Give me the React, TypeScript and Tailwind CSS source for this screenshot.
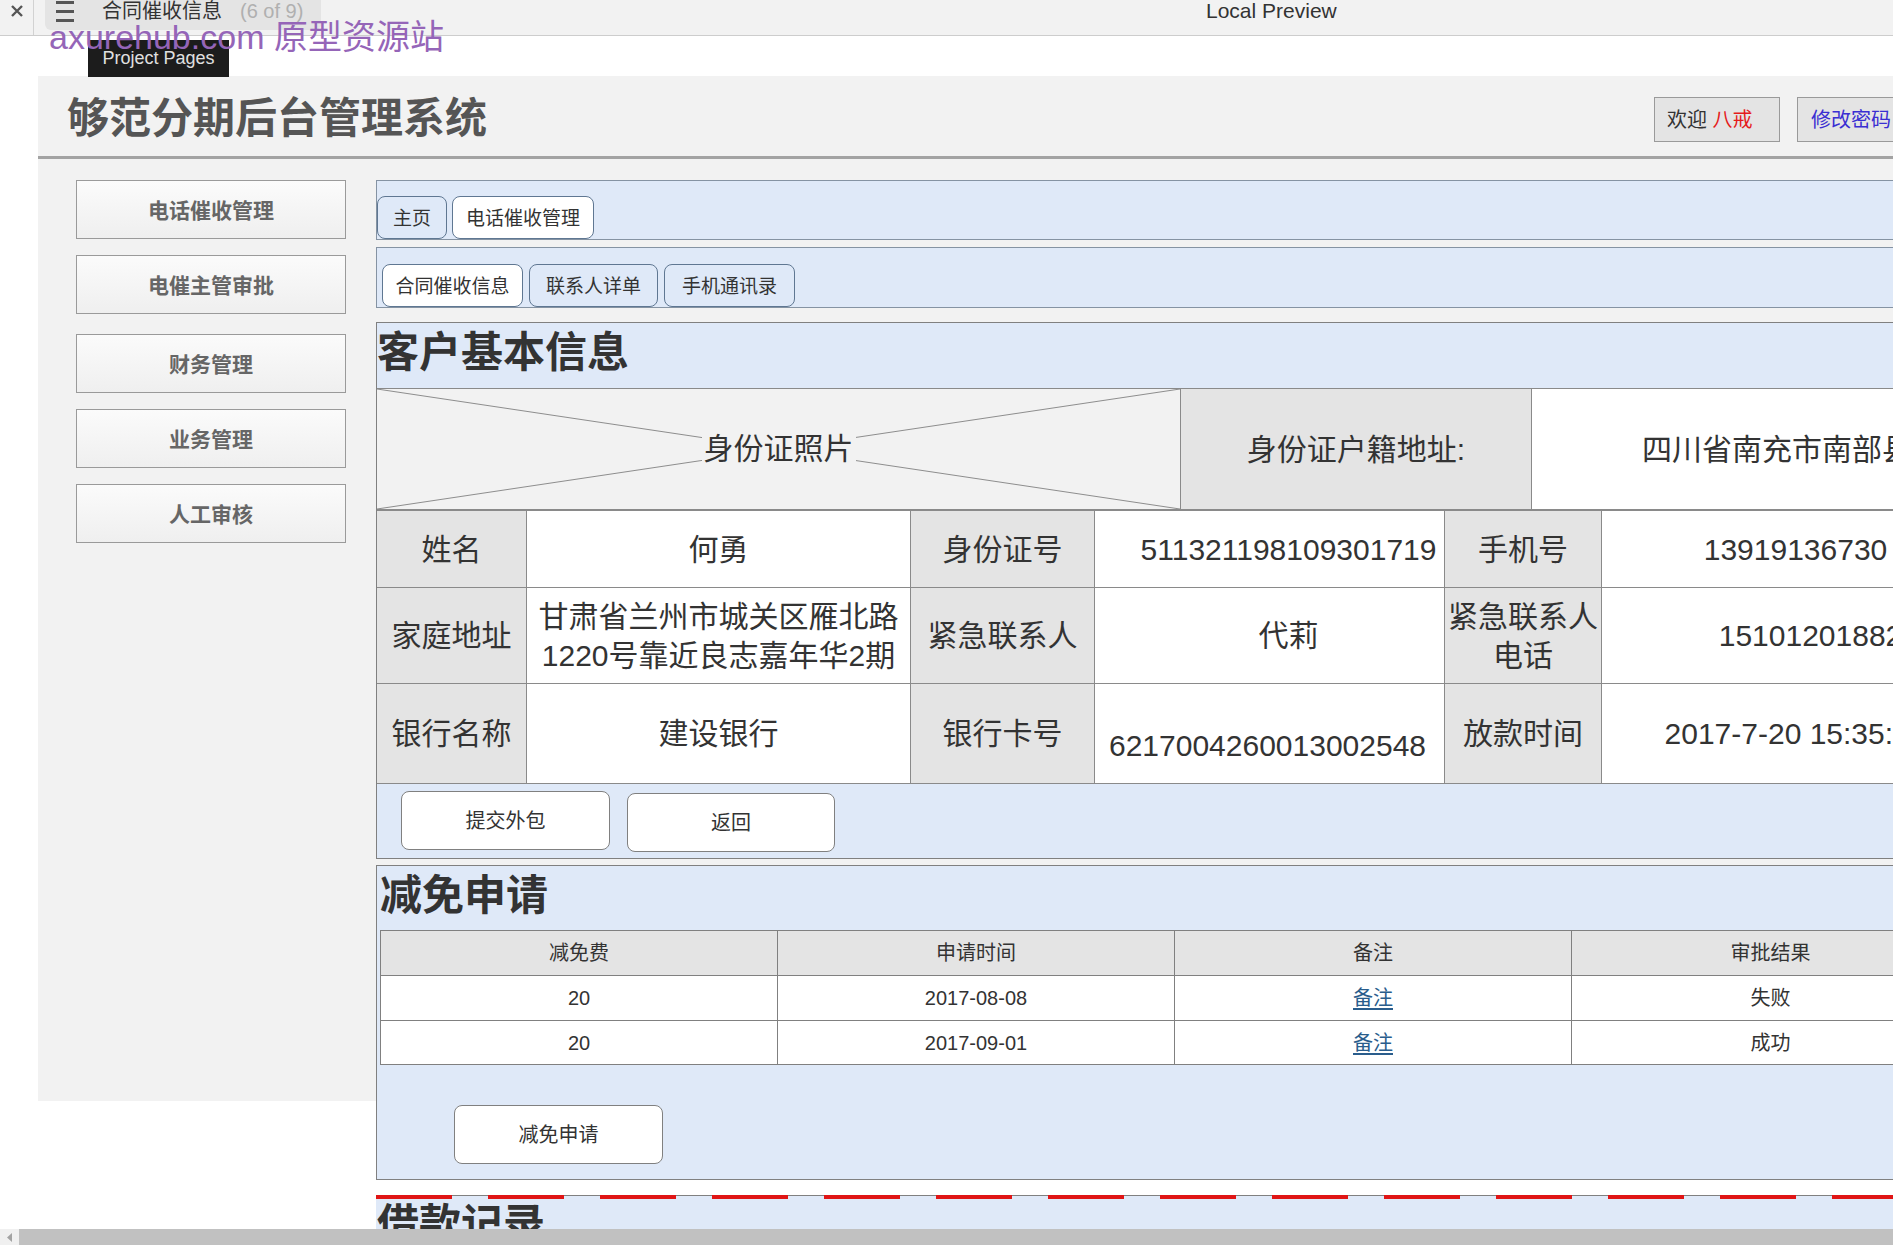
import React from 'react';

const FONT = "font-['Liberation_Sans','Noto_Sans_CJK_SC',sans-serif]";

const sideMenu = [
    { label: '电话催收管理', mt: 'mt-[21px]' },
    { label: '电催主管审批', mt: 'mt-[16px]' },
    { label: '财务管理', mt: 'mt-[20px]' },
    { label: '业务管理', mt: 'mt-[16px]' },
    { label: '人工审核', mt: 'mt-[16px]' },
];

const reliefRows = [
    { fee: '20', date: '2017-08-08', result: '失败', h: 'h-[45px]' },
    { fee: '20', date: '2017-09-01', result: '成功', h: 'h-[44px]' },
];

const Tab: React.FC<{ label: string; active?: boolean; width: string }> = ({ label, active, width }) => (
    <div
        className={`${width} h-[43px] flex items-center justify-center pt-[4px] rounded-[8px] border border-[#5f7792] text-[19px] text-[#333] ${active ? 'bg-white' : 'bg-[#dfe9f8]'}`}
    >
        {label}
    </div>
);

const Label: React.FC<{ children: React.ReactNode; className?: string }> = ({ children, className = '' }) => (
    <div className={`flex items-center justify-center bg-[#e4e4e4] border-r border-b border-[#8a8a8a] text-[30px] text-[#333] ${className}`}>
        {children}
    </div>
);

const Value: React.FC<{ children: React.ReactNode; className?: string }> = ({ children, className = '' }) => (
    <div className={`flex bg-white border-r border-b border-[#8a8a8a] text-[30px] text-[#333] whitespace-nowrap ${className}`}>
        {children}
    </div>
);

export default function App() {
    return (
        <div className={`relative w-[1893px] h-[1245px] overflow-hidden flex flex-col bg-white ${FONT}`}>
            {/* preview top bar */}
            <div className="h-[36px] shrink-0 flex items-start bg-[#f2f2f2] border-b border-[#cdcdcd]">
                <div className="w-[34px] h-full border-r border-[#d2d2d2] flex justify-center pt-[5px]">
                    <svg width="12" height="12" viewBox="0 0 12 12">
                        <path d="M1 1L11 11M11 1L1 11" stroke="#555" strokeWidth="2.4" />
                    </svg>
                </div>
                <div className="ml-[11px] w-[276px] h-[30px] rounded-b-[6px] bg-[#e4e4e4] flex items-start">
                    <svg className="ml-[11px] mt-[1px]" width="18" height="22" viewBox="0 0 18 22">
                        <path d="M0 1.5H18M0 10.5H18M0 19.5H18" stroke="#555" strokeWidth="3" />
                    </svg>
                    <span className="ml-[28px] text-[20px] leading-[22px] text-[#333]">合同催收信息</span>
                    <span className="ml-[18px] text-[20px] leading-[22px] text-[#b0b0b0]">(6 of 9)</span>
                </div>
                <span className="ml-[885px] text-[21px] leading-[22px] text-[#333]">Local Preview</span>
            </div>

            {/* page */}
            <div className="flex-1 overflow-hidden">
                <div className="w-[1990px] pt-[40px]">
                    <div className="ml-[38px] h-[1025px] bg-[#f2f2f2]">
                        {/* header */}
                        <div className="h-[83px] flex items-center pl-[29px] pr-[67px] border-b-[3px] border-[#a3a3a3]">
                            <h1 className="text-[42px] font-bold text-[#555] leading-none mt-[6px]">够范分期后台管理系统</h1>
                            <div className="ml-auto flex items-center gap-[17px] mt-[7px]">
                                <div className="w-[126px] h-[45px] flex items-center pl-[12px] bg-[#e4e4e4] border border-[#9a9a9a] text-[20px] text-[#333]">
                                    欢迎&nbsp;<span className="text-[#e41b1b]">八戒</span>
                                </div>
                                <div className="w-[126px] h-[45px] flex items-center pl-[13px] bg-[#e4e4e4] border border-[#9a9a9a] text-[20px] text-[#3a2fd2]">
                                    修改密码
                                </div>
                            </div>
                        </div>

                        <div className="flex">
                            {/* sidebar */}
                            <div className="w-[338px] shrink-0 pl-[38px]">
                                {sideMenu.map((m) => (
                                    <div
                                        key={m.label}
                                        className={`${m.mt} w-[270px] h-[59px] flex items-center justify-center pt-[2px] border border-[#9a9a9a] bg-gradient-to-b from-[#fbfbfb] to-[#efefef] text-[21px] font-bold text-[#666]`}
                                    >
                                        {m.label}
                                    </div>
                                ))}
                            </div>

                            {/* main */}
                            <div className="flex-1 pt-[21px]">
                                <div className="h-[60px] flex items-end gap-[5px] bg-[#dfe9f8] border border-[#8593a3]">
                                    <Tab label="主页" width="w-[70px]" />
                                    <Tab label="电话催收管理" width="w-[142px]" active />
                                </div>
                                <div className="mt-[7px] h-[61px] flex items-end gap-[6px] pl-[5px] bg-[#dfe9f8] border border-[#8593a3]">
                                    <Tab label="合同催收信息" width="w-[141px]" active />
                                    <Tab label="联系人详单" width="w-[129px]" />
                                    <Tab label="手机通讯录" width="w-[131px]" />
                                </div>

                                {/* 客户基本信息 */}
                                <div className="mt-[14px] bg-[#dfe9f8] border border-[#808080]">
                                    <div className="h-[65px] flex items-center pb-[6px]">
                                        <h2 className="text-[42px] font-bold text-[#333] leading-none">客户基本信息</h2>
                                    </div>
                                    <div className="h-[123px] flex border-t border-b-2 border-[#8a8a8a]">
                                        <div className="relative w-[804px] shrink-0 bg-[#f2f2f2] border-r border-[#8a8a8a] flex items-center justify-center">
                                            <svg className="absolute inset-0 w-full h-full" viewBox="0 0 804 121" preserveAspectRatio="none">
                                                <path d="M0 0L804 121M804 0L0 121" stroke="#8c8c8c" strokeWidth="1" fill="none" />
                                            </svg>
                                            <span className="relative bg-[#f2f2f2] px-[2px] text-[30px] leading-[34px] text-[#333]">身份证照片</span>
                                        </div>
                                        <div className="w-[351px] shrink-0 bg-[#e4e4e4] border-r border-[#8a8a8a] flex items-center justify-center text-[30px] text-[#333]">
                                            身份证户籍地址:
                                        </div>
                                        <div className="flex-1 bg-white flex items-center pl-[110px] text-[30px] text-[#333] whitespace-nowrap">
                                            四川省南充市南部县
                                        </div>
                                    </div>
                                    <div className="grid grid-cols-[150px_384px_184px_350px_157px_1fr]">
                                        <Label className="h-[77px]">姓名</Label>
                                        <Value className="items-center justify-center">何勇</Value>
                                        <Label>身份证号</Label>
                                        <Value className="items-center justify-center pl-[38px]">511321198109301719</Value>
                                        <Label>手机号</Label>
                                        <Value className="items-center justify-center border-r-0">13919136730</Value>

                                        <Label className="h-[96px]">家庭地址</Label>
                                        <Value className="items-center justify-center text-center leading-[39px]">
                                            <span>甘肃省兰州市城关区雁北路<br />1220号靠近良志嘉年华2期</span>
                                        </Value>
                                        <Label>紧急联系人</Label>
                                        <Value className="items-center justify-center pl-[38px]">代莉</Value>
                                        <Label className="text-center leading-[39px]">
                                            <span>紧急联系人<br />电话</span>
                                        </Label>
                                        <Value className="items-center justify-center pl-[30px] border-r-0">15101201882</Value>

                                        <Label className="h-[100px]">银行名称</Label>
                                        <Value className="items-center justify-center">建设银行</Value>
                                        <Label>银行卡号</Label>
                                        <Value className="items-end pl-[14px] pb-[15px]">6217004260013002548</Value>
                                        <Label>放款时间</Label>
                                        <Value className="items-center justify-center border-r-0">2017-7-20 15:35:05</Value>
                                    </div>
                                    <div className="h-[74px] flex items-start gap-[17px] pl-[24px] pt-[7px]">
                                        <button className="w-[209px] h-[59px] rounded-[8px] bg-white border border-[#808080] text-[20px] text-[#333]">提交外包</button>
                                        <button className="mt-[2px] w-[208px] h-[59px] rounded-[8px] bg-white border border-[#808080] text-[20px] text-[#333]">返回</button>
                                    </div>
                                </div>

                                {/* 减免申请 */}
                                <div className="mt-[6px] h-[315px] bg-[#dfe9f8] border border-[#808080]">
                                    <div className="h-[64px] flex items-center pl-[3px] pb-[4px]">
                                        <h2 className="text-[42px] font-bold text-[#333] leading-none">减免申请</h2>
                                    </div>
                                    <div className="ml-[3px] w-[1589px] grid grid-cols-[397px_397px_397px_398px] border-t border-l border-[#808080] text-[20px] text-[#333]">
                                        {['减免费', '申请时间', '备注', '审批结果'].map((h) => (
                                            <div key={h} className="h-[45px] flex items-center justify-center bg-[#e4e4e4] border-r border-b border-[#808080]">
                                                {h}
                                            </div>
                                        ))}
                                        {reliefRows.map((r) => (
                                            <React.Fragment key={r.date}>
                                                <div className={`${r.h} flex items-center justify-center bg-white border-r border-b border-[#808080]`}>{r.fee}</div>
                                                <div className="flex items-center justify-center bg-white border-r border-b border-[#808080]">{r.date}</div>
                                                <div className="flex items-center justify-center bg-white border-r border-b border-[#808080]">
                                                    <a className="text-[#2a5d8c] underline underline-offset-[3px]">备注</a>
                                                </div>
                                                <div className="flex items-center justify-center bg-white border-r border-b border-[#808080]">{r.result}</div>
                                            </React.Fragment>
                                        ))}
                                    </div>
                                    <button className="mt-[40px] ml-[77px] w-[209px] h-[59px] rounded-[8px] bg-white border border-[#808080] text-[20px] text-[#333]">
                                        减免申请
                                    </button>
                                </div>

                                {/* 借款记录 */}
                                <div className="mt-[15px] h-[120px] bg-[#dfe9f8] border-t border-[#808080]">
                                    <div className="h-[4px] -mt-px bg-[repeating-linear-gradient(90deg,#e01515_0px,#e01515_76px,transparent_76px,transparent_112px)]" />
                                    <div className="pl-px pt-[5px]">
                                        <h2 className="text-[42px] font-bold text-[#333] leading-none">借款记录</h2>
                                    </div>
                                </div>
                            </div>
                        </div>
                    </div>
                </div>
            </div>

            {/* horizontal scrollbar */}
            <div className="h-[16px] shrink-0 flex">
                <div className="w-[19px] h-full bg-[#f0f0f0] flex items-center justify-center">
                    <svg width="6" height="9" viewBox="0 0 6 9">
                        <path d="M5 0L0 4.5L5 9Z" fill="#a3a3a3" />
                    </svg>
                </div>
                <div className="flex-1 bg-[#c1c1c1]" />
            </div>

            {/* overlays */}
            <div className="absolute left-[88px] top-[40px] w-[141px] h-[37px] bg-[#1c1c1c] flex items-center justify-center text-[18px] text-[#e0e0e0]">
                Project Pages
            </div>
            <div className="absolute left-[49px] top-[15px] text-[34px] leading-[44px] text-[#9565b8] whitespace-nowrap pointer-events-none">
                axurehub.com 原型资源站
            </div>
        </div>
    );
}
